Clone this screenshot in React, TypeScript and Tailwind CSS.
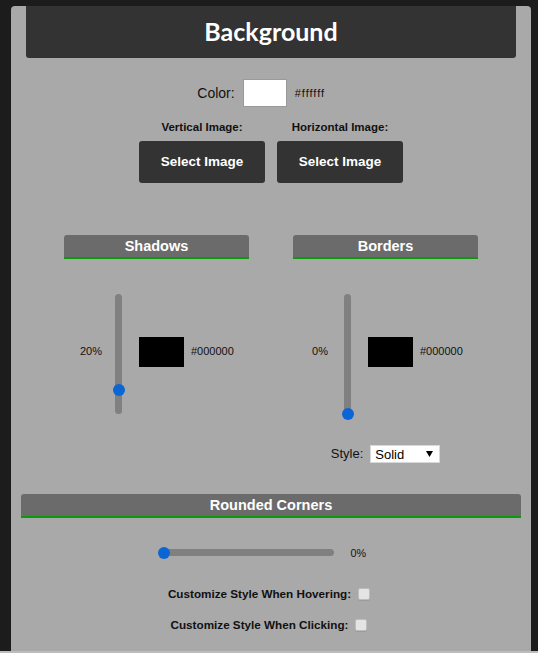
import React from "react";

function VSlider({ pct }: { pct: number }) {
  const top = 120 - (pct / 100) * 120 - 6;
  return (
    <div className="relative w-[7px] h-[120px] rounded-full bg-[#808080]">
      <div
        className="absolute left-1/2 -translate-x-1/2 w-[12px] h-[12px] rounded-full bg-[#0a66d4]"
        style={{ top }}
      />
    </div>
  );
}

function HSlider({ pct }: { pct: number }) {
  const left = (pct / 100) * (176 - 12);
  return (
    <div className="relative w-[176px] h-[12px]">
      <div className="absolute left-[2px] right-0 top-[2px] h-[7px] rounded-full bg-[#808080]" />
      <div
        className="absolute top-0 w-[12px] h-[12px] rounded-full bg-[#0a66d4]"
        style={{ left }}
      />
    </div>
  );
}

function SubHeader({ title }: { title: string }) {
  return (
    <div className="h-[24px] bg-[#6b6b6b] rounded-t-[3px] border-b-[2px] border-[#0a9a0a] flex items-center justify-center">
      <span className="text-white font-bold text-[14.5px] leading-none">{title}</span>
    </div>
  );
}

function SliderRow({ label, pct }: { label: string; pct: number }) {
  return (
    <div className="mt-[35px] h-[120px] flex items-center pl-[12px]">
      <div className="w-[30px] mb-[6px] text-center text-[11px] text-[#111]">{label}</div>
      <div className="ml-[9px]">
        <VSlider pct={pct} />
      </div>
      <div className="ml-[17px] mb-[4px] w-[45px] h-[30px] bg-black" />
      <div className="ml-[7px] mb-[6px] text-[11px] text-[#111]">#000000</div>
    </div>
  );
}

function Checkbox() {
  return (
    <div className="ml-[7px] mr-[4px] w-[12px] h-[12px] rounded-[2px] bg-[#e4e4e4] border border-[#bdbdbd] shadow-[0_1px_0_rgba(0,0,0,0.08)]" />
  );
}

export default function App() {
  return (
    <div className="w-[538px] h-[653px] bg-[#1c1c1c] flex flex-col font-['Liberation_Sans',Arial,sans-serif]">
      <div className="mx-[11px] mt-[6px] w-[520px] h-[645px] bg-[#a9a9a9] rounded-t-[4px] flex flex-col">
        {/* Title header */}
        <div className="mx-[15px] h-[52px] bg-[#333333] rounded-b-[3px] flex items-center justify-center">
          <span className="text-white font-bold text-[25px] leading-none font-['Lato','Noto_Sans',sans-serif] pb-[2px]">
            Background
          </span>
        </div>

        {/* Color row */}
        <div className="mt-[21px] h-[28px] flex items-center justify-center">
          <span className="text-[14px] text-[#111]">Color:</span>
          <div className="ml-[8px] w-[44px] h-[28px] bg-white border border-[#9a9a9a]" />
          <span className="ml-[8px] w-[50px] text-[11px] tracking-[1px] text-[#111]">#ffffff</span>
        </div>

        {/* Image selectors */}
        <div className="mt-[13px] flex justify-center gap-[12px]">
          <div className="flex flex-col items-center w-[126px]">
            <span className="text-[11.5px] leading-[14px] font-bold text-[#111]">Vertical Image:</span>
            <div className="mt-[7px] w-[126px] h-[42px] rounded-[3px] bg-[#333333] flex items-center justify-center">
              <span className="text-white font-bold text-[13.5px]">Select Image</span>
            </div>
          </div>
          <div className="flex flex-col items-center w-[126px]">
            <span className="text-[11.5px] leading-[14px] font-bold text-[#111]">Horizontal Image:</span>
            <div className="mt-[7px] w-[126px] h-[42px] rounded-[3px] bg-[#333333] flex items-center justify-center">
              <span className="text-white font-bold text-[13.5px]">Select Image</span>
            </div>
          </div>
        </div>

        {/* Shadows / Borders */}
        <div className="mt-[52px] flex justify-center gap-[44px]">
          <div className="w-[185px] flex flex-col">
            <SubHeader title="Shadows" />
            <SliderRow label="20%" pct={20} />
          </div>
          <div className="w-[185px] flex flex-col">
            <SubHeader title="Borders" />
            <SliderRow label="0%" pct={0} />
            <div className="mt-[31px] h-[18px] flex items-center justify-center">
              <span className="text-[13px] text-[#111]">Style:</span>
              <div className="ml-[7px] w-[70px] h-[18px] bg-white border border-[#d8d8d8] flex items-center justify-between pl-[4px] pr-[6px]">
                <span className="text-[13px] text-black leading-none">Solid</span>
                <svg width="7" height="6" viewBox="0 0 7 6">
                  <polygon points="0,0 7,0 3.5,6" fill="#000" />
                </svg>
              </div>
            </div>
          </div>
        </div>

        {/* Rounded corners */}
        <div className="mt-[31px] mx-[10px]">
          <SubHeader title="Rounded Corners" />
        </div>
        <div className="mt-[29px] h-[12px] flex items-center justify-center">
          <HSlider pct={0} />
          <span className="ml-[17px] w-[34px] text-[10.8px] text-[#111]">0%</span>
        </div>

        {/* Checkboxes */}
        <div className="mt-[27px] h-[16px] flex items-center justify-center">
          <span className="text-[11.7px] font-bold text-[#111]">Customize Style When Hovering:</span>
          <Checkbox />
        </div>
        <div className="mt-[15px] h-[16px] flex items-center justify-center">
          <span className="text-[11.7px] font-bold text-[#111]">Customize Style When Clicking:</span>
          <Checkbox />
        </div>
      </div>
      <div className="h-[2px] w-full bg-[#bdbdbd]" />
    </div>
  );
}
